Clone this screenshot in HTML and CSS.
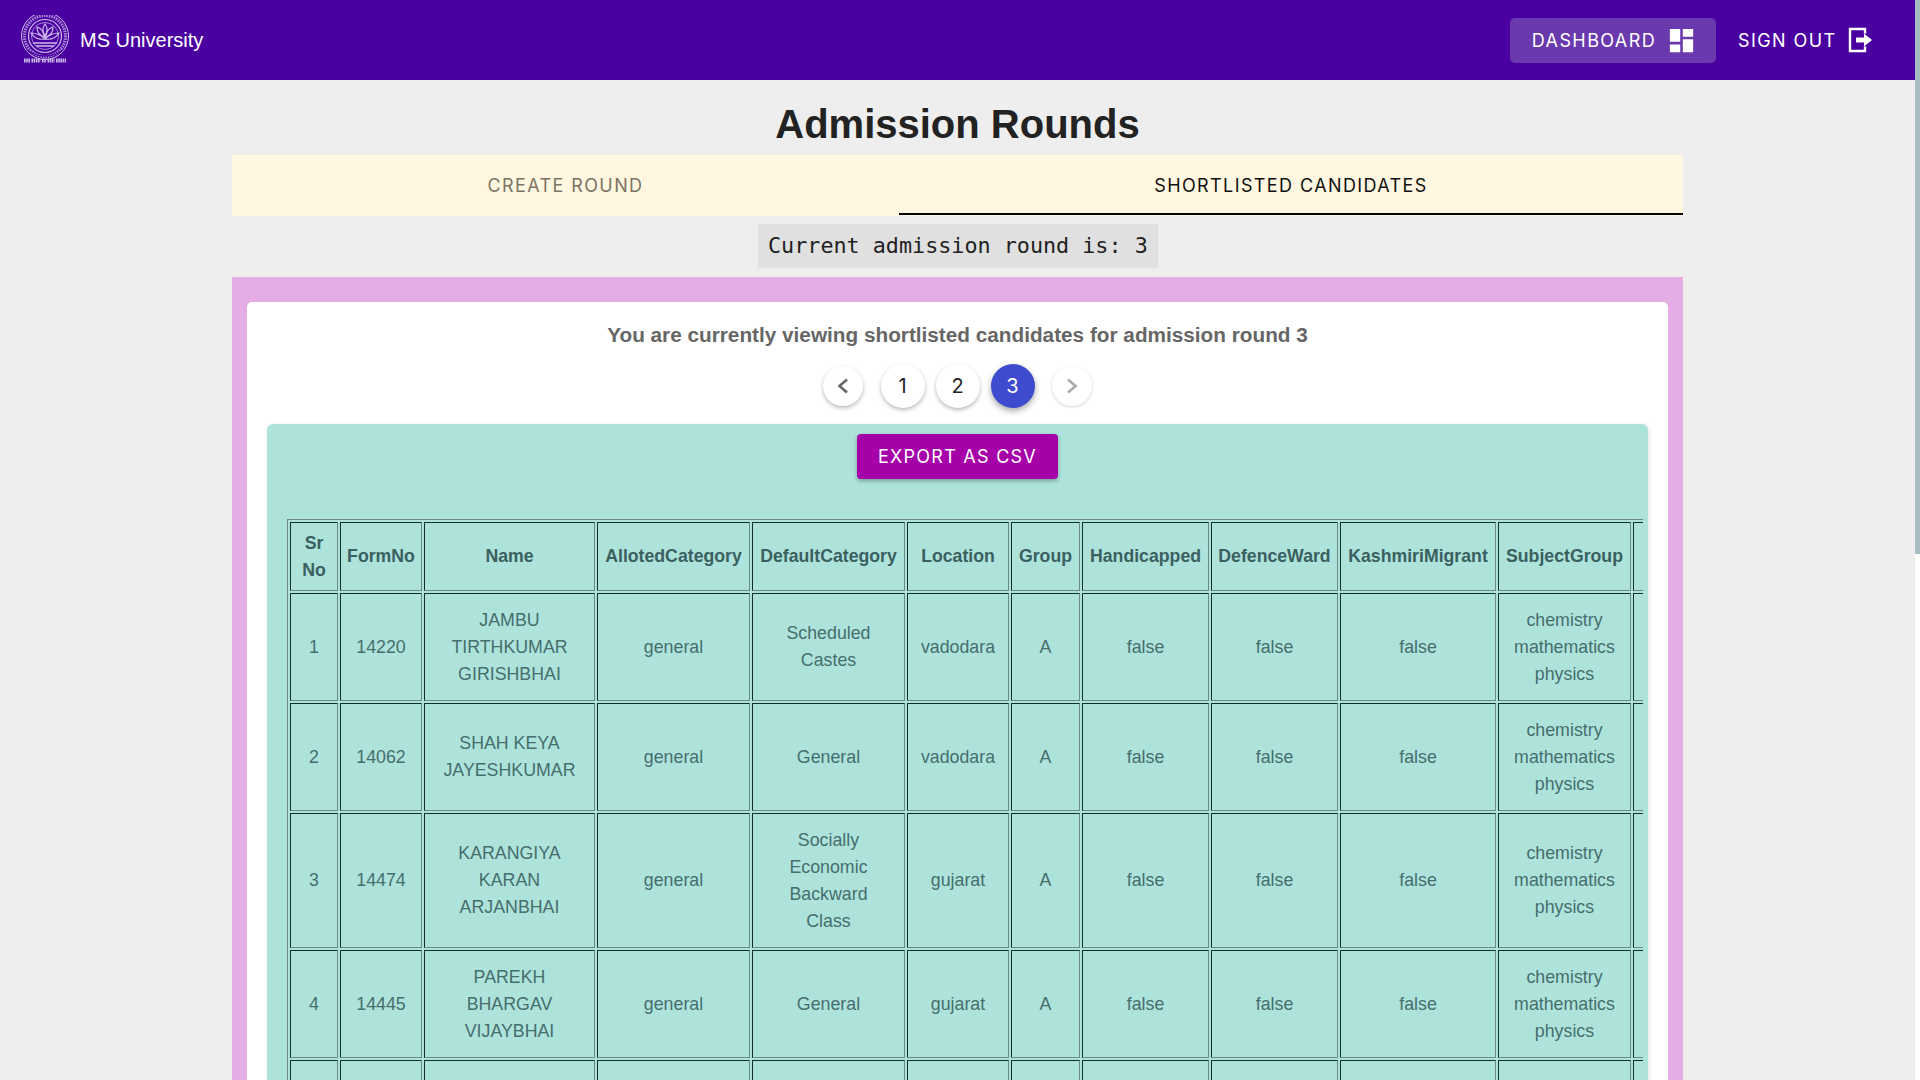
FILE: index.html
```html
<!DOCTYPE html>
<html lang="en">
<head>
<meta charset="utf-8">
<title>Admission Rounds</title>
<link rel="stylesheet" href="styles.css">
</head>
<body>
<div class="scrollbar"><div class="scrollbar-thumb"></div></div>
<header class="nav">
  <a class="brand">
    <svg class="logo" viewBox="0 0 50 50" fill="none" stroke="#cdbcec">
      <circle cx="25" cy="21" r="23.5" stroke-width="1"/>
      <circle cx="25" cy="21" r="20.5" stroke-width="3.2" stroke-dasharray="1.5 1" opacity=".75"/>
      <circle cx="25" cy="21" r="16.5" stroke-width="1.2"/>
      <circle cx="25" cy="21" r="13.5" stroke-width="1" opacity=".7"/>
      <path d="M25 9c3 4 3 8 0 13c-3-5-3-9 0-13z" stroke-width="1.2"/>
      <path d="M17 12c4 1 7 5 8 10c-5-1-8-5-8-10zM33 12c-4 1-7 5-8 10c5-1 8-5 8-10z" stroke-width="1.2"/>
      <path d="M11 18c5 0 10 2 14 6c-6 1-11-1-14-6zM39 18c-5 0-10 2-14 6c6 1 11-1 14-6z" stroke-width="1.2"/>
      <path d="M13 28h24M16 31h18" stroke-width="1.6"/>
      <path d="M7 35c5 4 11 6 18 6s13-2 18-6" stroke-width="1.4" stroke="#4a00a0"/>
      <path d="M4 45.500h6M11.500 45.500h9M22 45.500h4M27.500 45.500h7M36 45.500h10" stroke-width="4" stroke-dasharray="1.6 .6"/>
    </svg>
    <span class="brand-name">MS University</span>
  </a>
  <nav class="nav-actions">
    <a class="nav-btn nav-btn-active">DASHBOARD
      <svg class="nav-icon" viewBox="0 0 24 24" fill="#fff"><path d="M3 13h8V3H3v10zm0 8h8v-6H3v6zm10 0h8V11h-8v10zm0-18v6h8V3h-8z"/></svg>
    </a>
    <a class="nav-btn nav-btn-plain">SIGN OUT
      <svg class="nav-icon signout" viewBox="0 0 24 26" fill="none"><path d="M17 6.500V2H2v22h15v-4.500" stroke="#fff" stroke-width="2.400"/><path d="M8 10.500h8V6.500l8 6.500l-8 6.500v-4H8z" fill="#fff"/></svg>
    </a>
  </nav>
</header>

<main class="container">
  <h1 class="title">Admission Rounds</h1>
  <div class="tabs">
    <button class="tab tab-create">CREATE ROUND</button>
    <button class="tab tab-short tab-active">SHORTLISTED CANDIDATES</button>
  </div>
  <div class="round-row"><code class="round">Current admission round is: 3</code></div>

  <section class="band">
    <div class="card">
      <h2 class="viewing">You are currently viewing shortlisted candidates for admission round 3</h2>
      <div class="pager">
        <button class="page page-arrow"><svg class="chev" viewBox="0 0 24 24"><path d="M16 5.500l-7.500 6.500l7.500 6.500"/></svg></button>
        <button class="page page-num">1</button>
        <button class="page page-num">2</button>
        <button class="page page-num page-current">3</button>
        <button class="page page-arrow page-disabled"><svg class="chev" viewBox="0 0 24 24"><path d="M8 5.500l7.500 6.500l-7.500 6.500"/></svg></button>
      </div>
      <div class="panel">
        <div class="export-row"><button class="export">EXPORT AS CSV</button></div>
        <div class="scroller">
          <table class="grid">
            <colgroup>
              <col class="c48"><col class="c82"><col class="c171"><col class="c153"><col class="c153"><col class="c102"><col class="c69"><col class="c127"><col class="c127"><col class="c156"><col class="c133"><col class="c200">
            </colgroup>
            <thead>
              <tr><th>Sr No</th><th>FormNo</th><th>Name</th><th>AllotedCategory</th><th>DefaultCategory</th><th>Location</th><th>Group</th><th>Handicapped</th><th>DefenceWard</th><th>KashmiriMigrant</th><th>SubjectGroup</th><th></th></tr>
            </thead>
            <tbody>
              <tr><td>1</td><td>14220</td><td>JAMBU TIRTHKUMAR GIRISHBHAI</td><td>general</td><td>Scheduled Castes</td><td>vadodara</td><td>A</td><td>false</td><td>false</td><td>false</td><td>chemistry mathematics physics</td><td></td></tr>
              <tr><td>2</td><td>14062</td><td>SHAH KEYA JAYESHKUMAR</td><td>general</td><td>General</td><td>vadodara</td><td>A</td><td>false</td><td>false</td><td>false</td><td>chemistry mathematics physics</td><td></td></tr>
              <tr><td>3</td><td>14474</td><td>KARANGIYA KARAN ARJANBHAI</td><td>general</td><td>Socially Economic Backward Class</td><td>gujarat</td><td>A</td><td>false</td><td>false</td><td>false</td><td>chemistry mathematics physics</td><td></td></tr>
              <tr><td>4</td><td>14445</td><td>PAREKH BHARGAV VIJAYBHAI</td><td>general</td><td>General</td><td>gujarat</td><td>A</td><td>false</td><td>false</td><td>false</td><td>chemistry mathematics physics</td><td></td></tr>
              <tr><td></td><td></td><td></td><td></td><td>Socially Economic Backward Class</td><td></td><td></td><td></td><td></td><td></td><td></td><td></td></tr>
            </tbody>
          </table>
        </div>
      </div>
    </div>
  </section>
</main>
</body>
</html>
```
FILE: styles.css
```css
html { background: #eee; }
* { box-sizing: border-box; }
body { margin: 0; padding-right: 5px; font-family: "Liberation Sans", Arial, sans-serif; color: #222; }

.scrollbar { position: fixed; top: 0; right: 0; bottom: 0; width: 5px; background: #fff; }
.scrollbar-thumb { height: 554px; background: #a6bcc0; }

.nav { height: 80px; background: #4a00a0; display: flex; align-items: center; justify-content: space-between; padding: 0 21px 0 20px; }
.brand { display: flex; align-items: center; gap: 10px; }
.logo { width: 50px; height: 50px; display: block; }
.brand-name { font-size: 20px; color: #fff; }
.nav-actions { display: flex; align-items: center; }
.nav-btn { height: 45px; display: flex; align-items: center; padding: 0 22px; border-radius: 5px; color: #fff; font-family: Inter, sans-serif; font-size: 18px; letter-spacing: 1.4px; white-space: nowrap; }
.nav-btn-active { background: #6a39ae; padding-right: 19px; gap: 10px; }
.nav-btn-plain { gap: 11.500px; }
.nav-icon { width: 31px; height: 31px; display: block; }
.signout { width: 24px; height: 26px; }

.container { width: 1451px; margin: 0 auto; }
.title { margin: 20px 0 7px; font-size: 40px; line-height: 48px; font-weight: 700; text-align: center; color: #222; }
.tabs { display: flex; height: 61px; background: #fff7df; padding-bottom: 1px; }
.tab { border: 0; background: none; padding: 2px 0 0; font-family: Inter, sans-serif; font-size: 18px; letter-spacing: 1.4px; color: #7d7463; border-bottom: 2px solid transparent; }
.tab-create { width: 667px; }
.tab-short { flex: 1; }
.tab-active { color: #111; border-bottom-color: #000; }
.round-row { display: flex; justify-content: center; margin: 8px 0 9px; }
.round { height: 44px; width: 400px; padding: 0 10.500px 2px; display: flex; align-items: center; background: #e0e0e0; font-family: "DejaVu Sans Mono", monospace; font-size: 21.750px; color: #222; white-space: pre; }

.band { background: #e4ade6; padding: 25px 15px 0; min-height: 1828px; }
.card { background: #fff; border-radius: 5px; padding: 18px 20px 40px; min-height: 1803px; }
.viewing { margin: 0; font-size: 20.750px; line-height: 30px; font-weight: 700; text-align: center; color: #666; }
.pager { display: flex; justify-content: center; align-items: center; margin: 14px 0 16px; height: 44px; }
.page { border: 0; padding: 0; background: #fff; border-radius: 50%; display: flex; align-items: center; justify-content: center; box-shadow: 0 2px 4px rgba(0, 0, 0, .28); font-family: Inter, sans-serif; font-size: 20px; color: #222; }
.page-num { width: 44px; height: 44px; margin: 0 5.500px; }
.page-arrow { width: 40px; height: 40px; margin: 0 12px; }
.page-current { background: #3f4bce; color: #fff; box-shadow: 0 3px 6px rgba(0, 0, 0, .35); }
.page-disabled { box-shadow: 0 1px 3px rgba(0, 0, 0, .18); }
.chev { width: 24px; height: 24px; fill: none; stroke: #666; stroke-width: 2.600; }
.page-disabled .chev { stroke: #aaa; }

.panel { background: #aee3dc; border-radius: 6px; padding: 10px 5px 0 20px; box-shadow: 1px 1px 4px rgba(0, 0, 0, .12); min-height: 1400px; }
.export-row { display: flex; justify-content: center; margin: 0 15px 40px 0; }
.export { width: 201px; height: 45px; border: 0; border-radius: 4px; background: #a600a8; color: #fff; font-family: Inter, sans-serif; font-size: 18px; letter-spacing: 1.25px; box-shadow: 0 2px 4px rgba(0, 0, 0, .3); }
.scroller { overflow: hidden; }
.grid { table-layout: fixed; width: 1549px; border-collapse: separate; border-spacing: 2px; border: 1px solid; border-color: #6d8a88 #10302f #10302f #6d8a88; }
.grid th, .grid td { border: 1px solid; border-color: #10302f #6d8a88 #6d8a88 #10302f; text-align: center; line-height: 27px; }
.grid th { padding: 6.500px 6px; font-size: 17.700px; font-weight: 700; color: #3a6060; }
.grid td { padding: 12.500px; font-size: 17.800px; color: #466e6c; }
.c48 { width: 48px; } .c82 { width: 82px; } .c171 { width: 171px; } .c153 { width: 153px; }
.c102 { width: 102px; } .c69 { width: 69px; } .c127 { width: 127px; }
.c156 { width: 156px; } .c133 { width: 133px; } .c200 { width: 200px; }
```
